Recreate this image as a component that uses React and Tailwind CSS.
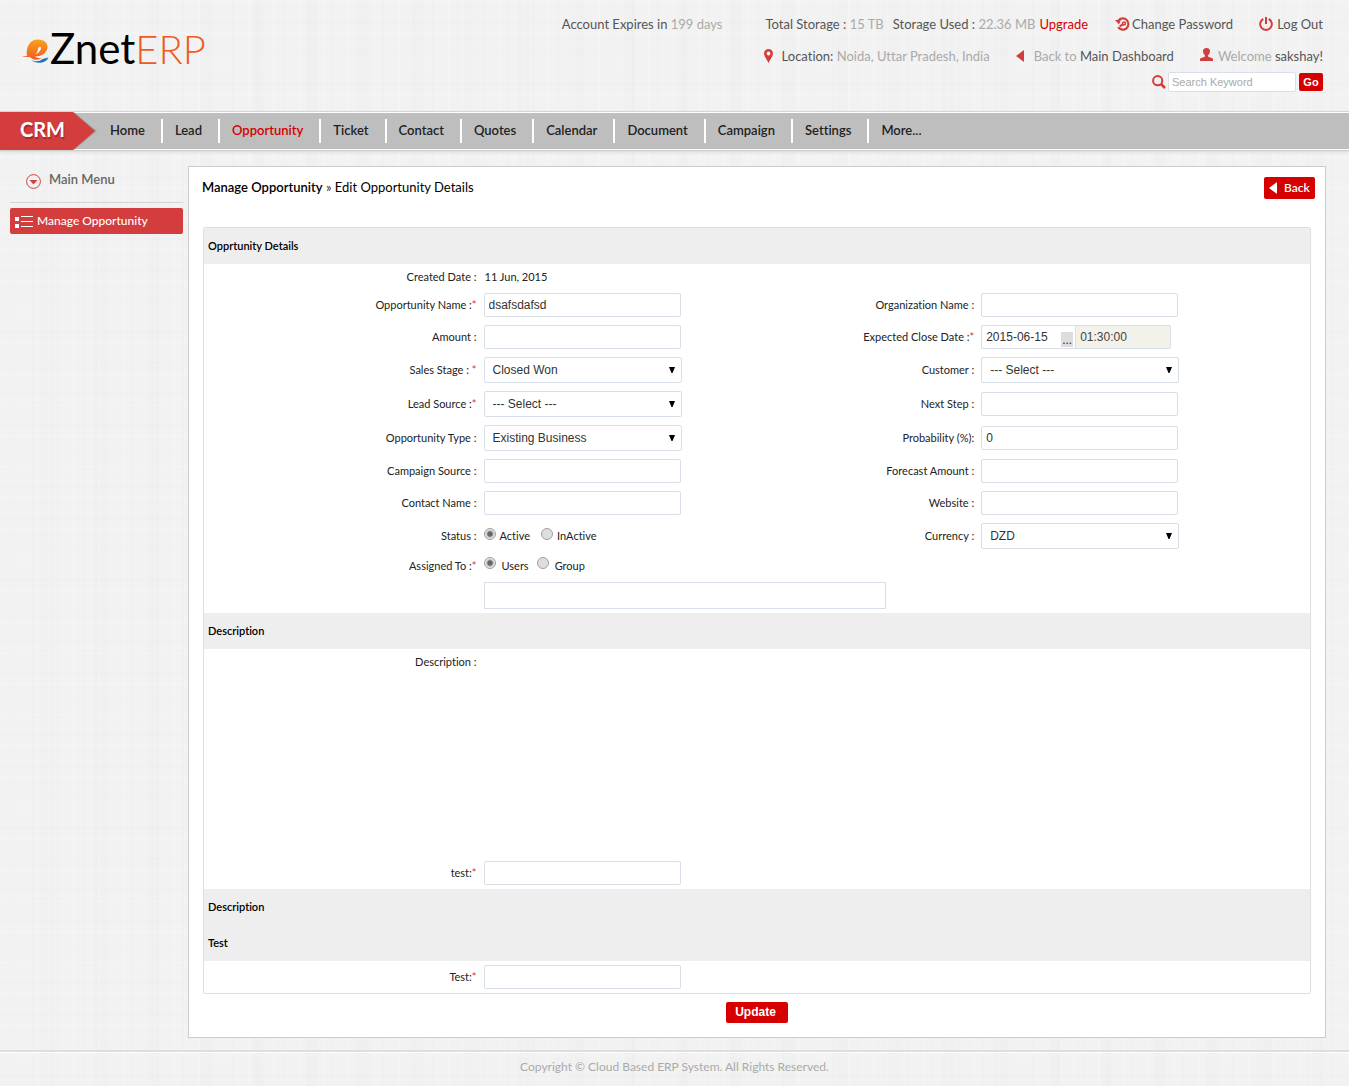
import { useState } from 'react';

const NAV = ['Home', 'Lead', 'Opportunity', 'Ticket', 'Contact', 'Quotes', 'Calendar', 'Document', 'Campaign', 'Settings', 'More...'];

const INPUT =
  'h-6 w-[197px] rounded-xs border border-[#d9dfe8] bg-white px-1 font-[\'Liberation_Sans\',Arial,sans-serif] text-xs text-[#333] outline-none';

function Logo() {
  return (
    <a href="#home" aria-label="eZnetERP" className="mt-6 ml-[22px] flex h-12 items-center">
      <svg width="28" height="28" viewBox="0 0 28 28" className="mt-1 shrink-0" aria-hidden="true">
        <defs>
          <linearGradient id="flame" x1="0" y1="0" x2="0" y2="1">
            <stop offset="0" stopColor="#f9a21b" />
            <stop offset="1" stopColor="#f15a24" />
          </linearGradient>
        </defs>
        <path
          d="M5 20 C3.500 11 8 3.500 16 3.500 C22 3.500 26 7 25.500 12 C24.500 17 19 20.500 13 20.500 C14.500 22 17 22.500 20 22 C15 25 10 23.500 8 21 C5 21.200 2.500 21 0 20.600 C2 19.800 3.500 20 5 20 Z M13 18.500 C16.500 17.500 19.500 14 19 11.800 C18.500 9.800 16 11 15.800 13.500 C15.600 15.500 14.600 17.500 13 18.500 Z"
          fill="url(#flame)"
          fillRule="evenodd"
        />
        <path d="M9.500 24 C13 26 18 25.500 20.500 23 L26.500 21.500 C24 27.500 14 28.500 9.500 24 Z" fill="#1b75bc" />
      </svg>
      <span className="flex items-baseline font-['Lato',sans-serif] leading-[48px]">
        <span className="text-[42px] text-black">Znet</span>
        <span className="text-[40px] font-light text-[#f15a24]">ERP</span>
      </span>
    </a>
  );
}

function PinIcon() {
  return (
    <svg width="9" height="14" viewBox="0 0 9 14" aria-hidden="true">
      <path fillRule="evenodd" fill="#d43d3d" d="M4.500 0 A4.500 4.500 0 0 1 9 4.500 C9 7.500 6 10.500 4.500 14 C3 10.500 0 7.500 0 4.500 A4.500 4.500 0 0 1 4.500 0 Z M4.500 2.600 A1.900 1.900 0 1 0 4.500 6.400 A1.900 1.900 0 1 0 4.500 2.600 Z" />
    </svg>
  );
}

function ResetIcon() {
  return (
    <svg width="15" height="14" viewBox="0 0 15 14" fill="none" stroke="#d43d3d" aria-hidden="true">
      <path d="M3.400 3.600 A5.600 5.600 0 1 1 3.200 10.200" strokeWidth="2.200" />
      <path d="M0 3 L5.800 3 L4 7.600 Z" fill="#d43d3d" stroke="none" />
      <path d="M4.800 9.400 L8.200 7.200" strokeWidth="2" />
      <circle cx="9" cy="6.400" r="1.500" strokeWidth="1.500" />
    </svg>
  );
}

function PowerIcon() {
  return (
    <svg width="14" height="14" viewBox="0 0 14 14" fill="none" stroke="#d43d3d" strokeWidth="2" aria-hidden="true">
      <path d="M4.300 2 A5.800 5.800 0 1 0 9.700 2" />
      <path d="M7 0 V7" />
    </svg>
  );
}

function UserIcon() {
  return (
    <svg width="13" height="13" viewBox="0 0 13 13" fill="#d43d3d" className="-mt-[3px]" aria-hidden="true">
      <path d="M6.500 0 C8.800 0 10.200 1.400 10 3.600 C9.800 5.400 8.800 6.700 8 7.400 V8.600 C9.500 9.600 13 9.800 13 11.500 V13 H0 V11.500 C0 9.800 3.500 9.600 5 8.600 V7.400 C4.200 6.700 3.200 5.400 3 3.600 C2.800 1.400 4.200 0 6.500 0 Z" />
    </svg>
  );
}

function SearchIcon() {
  return (
    <svg width="14" height="14" viewBox="0 0 14 14" fill="none" stroke="#d43d3d" strokeWidth="2" aria-hidden="true">
      <circle cx="5.700" cy="5.700" r="4.600" />
      <path d="M9 9 L13 13" strokeWidth="2.600" />
    </svg>
  );
}

function LeftTriangle({ className }) {
  return (
    <svg width="8" height="12" viewBox="0 0 8 12" fill="currentColor" className={className} aria-hidden="true">
      <path d="M0 6 L8 0 V12 Z" />
    </svg>
  );
}

function Header() {
  return (
    <header className="flex h-[111px] items-start justify-between pr-[26px] text-[13px] leading-4 text-[#555]">
      <Logo />
      <div className="flex flex-col items-end whitespace-nowrap">
        <div className="mt-4 flex items-center">
          <span>Account Expires in <span className="text-[#aaa]">199 days</span></span>
          <span className="ml-[43px]">Total Storage : <span className="text-[#aaa]">15 TB</span></span>
          <span className="ml-[9px]">Storage Used : <span className="text-[#aaa]">22.36 MB</span></span>
          <a href="#upgrade" className="ml-1 text-[#d60000]">Upgrade</a>
          <a href="#password" className="ml-[27px] flex items-center gap-[2px]"><ResetIcon />Change Password</a>
          <a href="#logout" className="ml-[26px] flex items-center gap-1"><PowerIcon />Log Out</a>
        </div>
        <div className="mt-4 flex items-center">
          <span className="flex items-center gap-[9px]">
            <PinIcon />
            <span>Location: <span className="text-[#aaa]">Noida, Uttar Pradesh, India</span></span>
          </span>
          <a href="#dashboard" className="ml-[26px] flex items-center gap-[10px]">
            <LeftTriangle className="text-[#d43d3d]" />
            <span><span className="text-[#aaa]">Back to</span> Main Dashboard</span>
          </a>
          <span className="ml-[26px] flex items-center gap-[5px]">
            <UserIcon />
            <span><span className="text-[#aaa]">Welcome</span> sakshay!</span>
          </span>
        </div>
        <form className="mt-2 flex items-center" onSubmit={(e) => e.preventDefault()}>
          <SearchIcon />
          <input
            type="text"
            aria-label="Search Keyword"
            placeholder="Search Keyword"
            className="ml-[2px] h-5 w-32 rounded-xs border border-[#d9dfe8] bg-white px-[3px] font-['Liberation_Sans',Arial,sans-serif] text-[11px] outline-none placeholder:text-[#a9a9a9]"
          />
          <button type="submit" className="ml-[3px] h-[18px] w-6 rounded-xs bg-[#d60000] font-['Liberation_Sans',Arial,sans-serif] text-[11px] leading-[18px] font-bold text-white">
            Go
          </button>
        </form>
      </div>
    </header>
  );
}

function NavBar() {
  return (
    <nav className="flex h-[39px] items-center border-t border-[#d4d4d4] bg-[#bebebe] shadow-[inset_0_1px_0_#fff,inset_0_-1px_0_#fff,0_1px_0_#d0d0d0,0_2px_3px_#d4d4d4]">
      <div className="relative h-[38px] w-[95px] shrink-0">
        <svg viewBox="0 0 98 38" width="98" height="38" className="absolute inset-0" aria-hidden="true">
          <path d="M74 0 L97 19 L74 38 Z" fill="#a2a2a2" />
          <path d="M0 0 H73 L95 19 L73 38 H0 Z" fill="#d43d3d" />
        </svg>
        <span className="relative block pl-5 text-xl leading-[34px] font-bold text-white [text-shadow:1px_2px_1px_#a02c2c]">CRM</span>
      </div>
      <ul className="ml-px flex">
        {NAV.map((item) => (
          <li key={item} className="border-l-2 border-white pr-4 pl-3 leading-6 first:border-transparent">
            <a
              href={'#' + item.toLowerCase()}
              className={item === 'Opportunity' ? 'block h-6 text-[13px] leading-[22px] font-semibold text-[#d60000]' : 'block h-6 text-[13px] leading-[22px] font-semibold text-[#222]'}
            >
              {item}
            </a>
          </li>
        ))}
      </ul>
    </nav>
  );
}

function Sidebar() {
  return (
    <aside className="ml-[10px] w-[173px] shrink-0">
      <h2 className="flex h-[37px] items-center gap-2 border-b border-[#d4d4d4] pb-2 pl-4 text-[13px] font-semibold text-[#666]">
        <svg width="15" height="15" viewBox="0 0 15 15" className="mt-[2px]" aria-hidden="true">
          <circle cx="7.500" cy="7.500" r="6.900" fill="none" stroke="#d43d3d" />
          <path d="M3.500 6 H11.500 L7.500 10.500 Z" fill="#d43d3d" />
        </svg>
        Main Menu
      </h2>
      <a href="#manage" className="mt-[5px] flex h-[26px] items-center gap-1 rounded-xs bg-[#d43d3d] pl-[5px] text-xs font-medium text-white">
        <svg width="18" height="12" viewBox="0 0 18 12" fill="#fff" className="mt-[2px]" aria-hidden="true">
          <path d="M0 1 H4 V5 H0 Z M0 8 H4 V12 H0 Z M6 0 H18 V1 H6 Z M6 5 H18 V6 H6 Z M6 10 H18 V11 H6 Z" />
        </svg>
        Manage Opportunity
      </a>
    </aside>
  );
}

function Row({ children, className }) {
  return <div className={'grid grid-cols-[25fr_25fr_20fr_30fr] items-center ' + (className || '')}>{children}</div>;
}

function Label({ text, star, id }) {
  return (
    <label htmlFor={id} className="pr-1 text-right whitespace-nowrap">
      {text}
      {star && <span className="text-[#e03030]">*</span>}
    </label>
  );
}

function TextField({ id, value }) {
  return (
    <div className="py-1 pl-[3px]">
      <input id={id} type="text" defaultValue={value} className={'block ' + INPUT} />
    </div>
  );
}

function SelectField({ id, value }) {
  return (
    <div className="py-1 pl-[3px]">
      <div className="relative w-[198px]">
        <select
          id={id}
          defaultValue={value}
          className="block h-[26px] w-full appearance-none rounded-xs border border-[#d9dfe8] bg-white pl-2 font-['Liberation_Sans',Arial,sans-serif] text-xs text-[#333] outline-none"
        >
          <option>{value}</option>
        </select>
        <svg width="6" height="6" viewBox="0 0 6 6" className="pointer-events-none absolute top-[10px] right-[7px]" aria-hidden="true">
          <path d="M0 0 H6 L3.500 6 H2.500 Z" fill="#000" />
        </svg>
      </div>
    </div>
  );
}

function Radio({ name, label, checked, onChange, className }) {
  return (
    <label className={'flex items-center ' + className}>
      <input
        type="radio"
        name={name}
        checked={checked}
        onChange={onChange}
        className="mb-[5px] size-3 appearance-none rounded-full border border-[#a0a0a0] bg-[#dedede] checked:bg-[radial-gradient(circle,#666_0_2px,#e4e4e4_4px)]"
      />
      {label}
    </label>
  );
}

function SectionTitle({ children }) {
  return <h3 className="flex h-9 items-center bg-[#eee] pl-1 font-semibold text-black">{children}</h3>;
}

function OpportunityForm() {
  const [status, setStatus] = useState('Active');
  const [assignee, setAssignee] = useState('Users');
  return (
    <form onSubmit={(e) => e.preventDefault()}>
      <div className="rounded-xs border border-[#dedede] text-[11px] leading-4 text-[#222]">
        <SectionTitle>Opprtunity Details</SectionTitle>
        <Row className="h-[25px]">
          <span className="pr-1 text-right">Created Date :</span>
          <span className="pl-1">11 Jun, 2015</span>
        </Row>
        <Row>
          <Label id="name" text="Opportunity Name :" star />
          <TextField id="name" value="dsafsdafsd" />
          <Label id="org" text="Organization Name :" />
          <TextField id="org" />
        </Row>
        <Row>
          <Label id="amount" text="Amount :" />
          <TextField id="amount" />
          <Label id="close" text="Expected Close Date :" star />
          <div className="flex py-1 pl-[3px]">
            <div className="flex h-6 w-[94px] items-end rounded-l-xs border border-r-0 border-[#d9dfe8] bg-white">
              <input
                id="close"
                type="text"
                defaultValue="2015-06-15"
                className="h-[22px] w-[79px] bg-transparent pl-1 font-['Liberation_Sans',Arial,sans-serif] text-xs text-[#333] outline-none"
              />
              <button type="button" aria-label="Choose date" className="mb-px h-[15px] w-3 bg-[#ddd] font-['Liberation_Sans',Arial,sans-serif] text-xs leading-[17px]">...</button>
            </div>
            <input
              type="text"
              aria-label="Close time"
              readOnly
              value="01:30:00"
              className="h-6 w-24 rounded-r-xs border border-[#d9dfe8] bg-[#f3f2ea] px-1 font-['Liberation_Sans',Arial,sans-serif] text-xs text-[#444] outline-none"
            />
          </div>
        </Row>
        <Row>
          <Label id="stage" text="Sales Stage : " star />
          <SelectField id="stage" value="Closed Won" />
          <Label id="customer" text="Customer :" />
          <SelectField id="customer" value="--- Select ---" />
        </Row>
        <Row>
          <Label id="lead" text="Lead Source :" star />
          <SelectField id="lead" value="--- Select ---" />
          <Label id="next" text="Next Step :" />
          <TextField id="next" />
        </Row>
        <Row>
          <Label id="type" text="Opportunity Type :" />
          <SelectField id="type" value="Existing Business" />
          <Label id="probability" text="Probability (%):" />
          <TextField id="probability" value="0" />
        </Row>
        <Row>
          <Label id="campaign" text="Campaign Source :" />
          <TextField id="campaign" />
          <Label id="forecast" text="Forecast Amount :" />
          <TextField id="forecast" />
        </Row>
        <Row>
          <Label id="contact" text="Contact Name :" />
          <TextField id="contact" />
          <Label id="website" text="Website :" />
          <TextField id="website" />
        </Row>
        <Row>
          <span className="pr-1 text-right">Status :</span>
          <div className="flex pl-[3px]" role="radiogroup" aria-label="Status">
            <Radio name="status" label="Active" className="gap-1" checked={status === 'Active'} onChange={() => setStatus('Active')} />
            <Radio name="status" label="InActive" className="ml-[11px] gap-1" checked={status === 'InActive'} onChange={() => setStatus('InActive')} />
          </div>
          <Label id="currency" text="Currency :" />
          <SelectField id="currency" value="DZD" />
        </Row>
        <Row className="h-[25px]">
          <span className="pr-1 text-right">Assigned To :<span className="text-[#e03030]">*</span></span>
          <div className="flex pl-[3px]" role="radiogroup" aria-label="Assigned To">
            <Radio name="assignee" label="Users" className="gap-[6px]" checked={assignee === 'Users'} onChange={() => setAssignee('Users')} />
            <Radio name="assignee" label="Group" className="ml-2 gap-[6px]" checked={assignee === 'Group'} onChange={() => setAssignee('Group')} />
          </div>
        </Row>
        <Row>
          <div className="col-span-3 col-start-2 py-1 pl-[3px]">
            <input type="text" aria-label="Assigned users" className="block h-[27px] w-[402px] border border-[#d9dfe8] bg-white px-1 font-['Liberation_Sans',Arial,sans-serif] text-xs outline-none" />
          </div>
        </Row>
        <SectionTitle>Description</SectionTitle>
        <Row className="h-52 content-start pt-[5px]">
          <span className="pr-1 text-right">Description :</span>
        </Row>
        <Row>
          <Label id="test-a" text="test:" star />
          <TextField id="test-a" />
        </Row>
        <SectionTitle>Description</SectionTitle>
        <SectionTitle>Test</SectionTitle>
        <Row>
          <Label id="test-b" text="Test:" star />
          <TextField id="test-b" />
        </Row>
      </div>
      <div className="flex justify-center pt-2 pb-[14px]">
        <button type="submit" className="h-[21px] w-[62px] rounded-xs bg-[#d60000] pr-[3px] pb-[2px] font-['Liberation_Sans',Arial,sans-serif] text-xs font-bold text-white">
          Update
        </button>
      </div>
    </form>
  );
}

export default function App() {
  return (
    <div className="min-h-screen bg-[#f2f2f2] bg-[repeating-linear-gradient(90deg,#0000_0_7px,#00000002_7px_9px,#0000_9px_23px,#ffffff28_23px_25px),repeating-linear-gradient(0deg,#0000_0_9px,#00000002_9px_11px,#0000_11px_29px,#ffffff28_29px_31px),repeating-linear-gradient(90deg,#0000_0_41px,#00000002_41px_53px)] font-['Lato',sans-serif] [font-variant-ligatures:none]">
      <Header />
      <NavBar />
      <div className="flex items-start pt-4">
        <Sidebar />
        <main className="mr-[23px] ml-[5px] min-w-0 flex-1 border border-[#ccc] bg-white px-[14px]">
          <div className="flex h-[60px] items-start justify-between pt-[10px]">
            <p className="-ml-px text-[13px] leading-5 text-black">
              <span className="font-semibold">Manage Opportunity</span> <span className="text-[#335]">»</span> Edit Opportunity Details
            </p>
            <a href="#back" className="-mr-1 flex h-[22px] w-[51px] items-center gap-[7px] rounded-xs bg-[#d60000] pl-[5px] text-xs font-semibold text-white">
              <LeftTriangle className="text-white" />
              Back
            </a>
          </div>
          <OpportunityForm />
        </main>
      </div>
      <footer className="mt-3 h-9 border-t-2 border-[#dedede] pt-[5px] text-center text-xs leading-5 text-[#aaa] shadow-[inset_0_1px_0_#fff]">
        Copyright © Cloud Based ERP System. All Rights Reserved.
      </footer>
    </div>
  );
}
